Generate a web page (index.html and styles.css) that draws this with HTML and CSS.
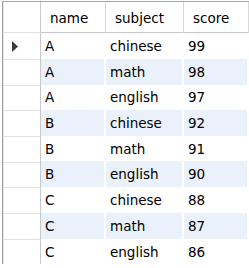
FILE: index.html
```html
<!DOCTYPE html>
<html>
<head>
<meta charset="utf-8">
<link rel="stylesheet" href="styles.css">
</head>
<body>
<div class="grid">
  <div class="hdr">
    <div class="hcell ind"></div>
    <div class="hcell">name</div>
    <div class="hcell">subject</div>
    <div class="hcell">score</div>
  </div>
  <div class="row">
    <div class="ind"><svg class="arrow" width="6" height="11" viewBox="0 0 6 11"><polygon points="0,0 6,5.5 0,11" fill="#3a3a3a"/></svg></div>
    <div class="cell">A</div><div class="cell">chinese</div><div class="cell">99</div>
  </div>
  <div class="row alt">
    <div class="ind"></div>
    <div class="cell">A</div><div class="cell">math</div><div class="cell">98</div>
  </div>
  <div class="row">
    <div class="ind"></div>
    <div class="cell">A</div><div class="cell">english</div><div class="cell">97</div>
  </div>
  <div class="row alt">
    <div class="ind"></div>
    <div class="cell">B</div><div class="cell">chinese</div><div class="cell">92</div>
  </div>
  <div class="row">
    <div class="ind"></div>
    <div class="cell">B</div><div class="cell">math</div><div class="cell">91</div>
  </div>
  <div class="row alt">
    <div class="ind"></div>
    <div class="cell">B</div><div class="cell">english</div><div class="cell">90</div>
  </div>
  <div class="row">
    <div class="ind"></div>
    <div class="cell">C</div><div class="cell">chinese</div><div class="cell">88</div>
  </div>
  <div class="row alt">
    <div class="ind"></div>
    <div class="cell">C</div><div class="cell">math</div><div class="cell">87</div>
  </div>
  <div class="row">
    <div class="ind"></div>
    <div class="cell">C</div><div class="cell">english</div><div class="cell">86</div>
  </div>
</div>
</body>
</html>
```

FILE: styles.css
```css
html, body {
  margin: 0;
  padding: 0;
  background: #ffffff;
}
body {
  font-family: "DejaVu Sans", Verdana, sans-serif;
  font-size: 13.5px;
  color: #000000;
}
.grid {
  margin: 1px 0 0 2px;
  width: 246px;
  border-top: 1px solid #a8a8a8;
  border-left: 1px solid #a0a0a0;
  box-shadow: inset 1px 0 0 #e6e6e6;
}
.hdr, .row {
  display: grid;
  grid-template-columns: 38px 65px 78px 65px;
}
.hdr {
  height: 30px;
  border-bottom: 1px solid #c8c8c8;
}
.hcell {
  box-sizing: border-box;
  border-right: 1px solid #d8d8d8;
  padding: 1px 0 0 9px;
  line-height: 30px;
}
.hcell.ind {
  border-right: 1px solid #c8c8c8;
}
.row {
  height: 25.7px;
}
.ind {
  box-sizing: border-box;
  border-right: 1px solid #c8c8c8;
  border-bottom: 1px solid #e2e2e2;
  display: flex;
  align-items: center;
  padding: 1px 0 0 9px;
}
.cell {
  box-sizing: border-box;
  border-right: 2px solid #ffffff;
  border-bottom: 1px solid #ffffff;
  padding: 1px 0 0 4px;
  line-height: 25px;
}
.alt .cell {
  background: #eaf1fb;
}
.arrow {
  display: block;
}
```
